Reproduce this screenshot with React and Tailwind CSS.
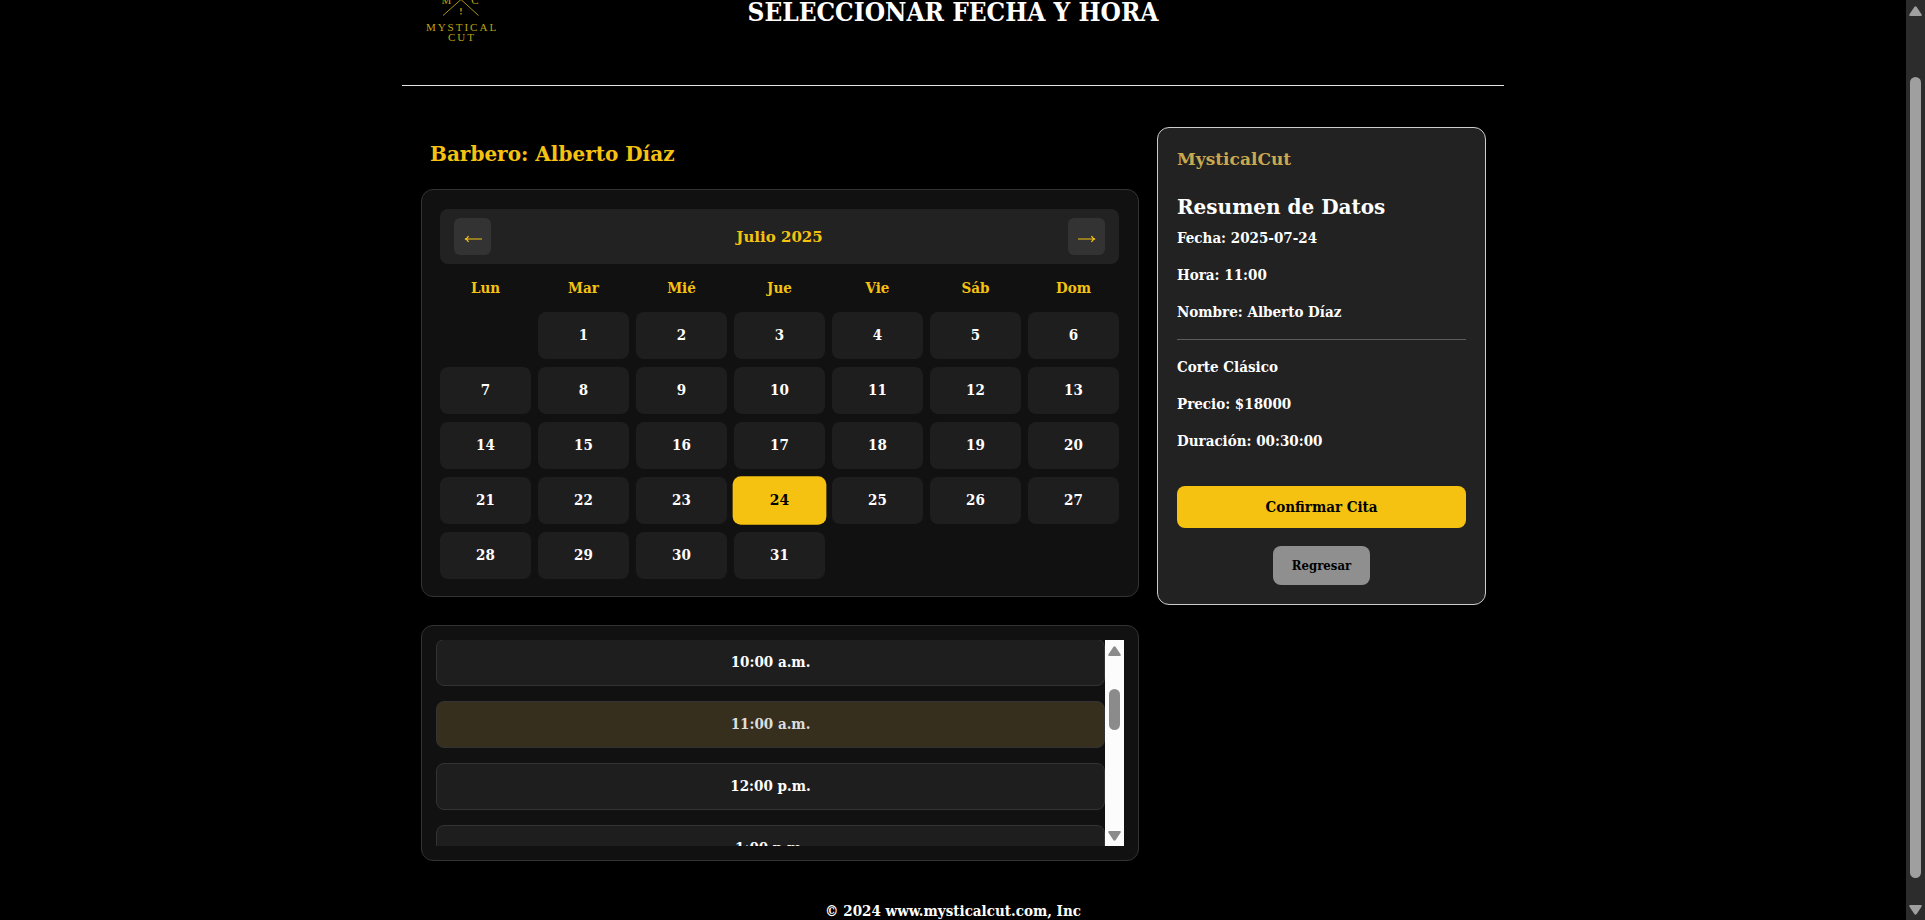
import React, { useState } from "react";

const WEEKDAYS = ["Lun", "Mar", "Mié", "Jue", "Vie", "Sáb", "Dom"];
const DAYS = Array.from({ length: 31 }, (_, i) => i + 1);
const HOURS = ["10:00 a.m.", "11:00 a.m.", "12:00 p.m.", "1:00 p.m."];

function Logo() {
  return (
    <svg
      viewBox="0 0 88 88"
      className="h-[88px] w-[88px]"
      role="img"
      aria-label="Mystical Cut"
      fill="#bda512"
      stroke="none"
    >
      <g fill="none" stroke="#a8920f" strokeWidth="1">
        <path d="M26 47.500 L44 31.500 L61.500 47.500" />
        <path d="M62 15 L44 31 L27 15" />
        <path d="M44 40v3.500M44 45v1.500" strokeWidth="1.500" />
      </g>
      <g fontFamily="'Liberation Serif', serif" fontWeight="400" textAnchor="middle">
        <text x="29.500" y="36" fontSize="11">M</text>
        <text x="58" y="36" fontSize="11">C</text>
        <text x="45" y="63" fontSize="11" letterSpacing="2">MYSTICAL</text>
        <text x="45" y="73" fontSize="11" letterSpacing="2">CUT</text>
      </g>
    </svg>
  );
}

function Arrow({ down = false, className = "" }) {
  return (
    <svg viewBox="0 0 13 10" className={"h-[10px] w-[13px] " + className} aria-hidden="true">
      <path
        d={
          down
            ? "M1.500 0h10q2 0 1 1.700L7.700 9q-1.200 1.500-2.400 0L.5 1.700Q-.5 0 1.500 0z"
            : "M1.500 10h10q2 0 1-1.700L7.700 1Q6.500-.5 5.300 1L.5 8.300Q-.5 10 1.500 10z"
        }
        fill="currentColor"
      />
    </svg>
  );
}

function MonthButton({ label, flip = false }) {
  return (
    <button
      type="button"
      aria-label={label}
      className="flex h-[37px] w-[37px] items-center justify-center rounded-md bg-[#333333] text-[#f5c211]"
    >
      <svg viewBox="0 0 18 8" className={flip ? "mt-1 h-2 w-[18px] rotate-180" : "mt-1 h-2 w-[18px]"}>
        <path d="M1 4h17M4.500 1C4 2.500 3 3.500 1 4c2 .5 3 1.500 3.500 3" fill="none" stroke="currentColor" strokeWidth="1.200" />
      </svg>
    </button>
  );
}

export default function App() {
  const [day, setDay] = useState(24);
  const [hour, setHour] = useState("11:00 a.m.");

  return (
    <div className="flex h-screen overflow-hidden bg-black font-['DejaVu_Serif_Condensed','DejaVu_Serif',serif] text-[15px] font-bold text-white">
      <div className="min-w-0 flex-1 overflow-hidden">
        <div className="mx-auto -mt-14 w-full max-w-[1102px]">
          <header className="grid grid-cols-[1fr_auto_1fr] items-center border-b border-[#e5e5e5] px-[15px] pt-6 pb-[29px]">
            <Logo />
            <h1 className="text-[26px] leading-8">SELECCIONAR FECHA Y HORA</h1>
          </header>

          <main className="flex items-start gap-[18px] pt-[41px] pr-[18px] pl-[19px]">
            <section className="min-w-0 flex-1">
              <h2 className="mt-3 mb-5 ml-[9px] font-['DejaVu_Serif',serif] text-xl leading-[30px] text-[#f5c211]">
                Barbero: Alberto Díaz
              </h2>

              <div className="rounded-xl border border-[#333333] bg-[#111111] pt-[19px] pr-[19px] pb-[17px] pl-[18px]">
                <div className="flex items-center justify-between rounded-lg bg-[#222222] px-[14px] py-[9px]">
                  <MonthButton label="Mes anterior" />
                  <h3 className="font-['DejaVu_Serif',serif] text-[15px] leading-6 text-[#f5c211]">Julio 2025</h3>
                  <MonthButton label="Mes siguiente" flip />
                </div>
                <div className="mt-[14px] grid grid-cols-7 gap-x-[7px] text-center leading-5 text-[#f5c211]">
                  {WEEKDAYS.map((w) => (
                    <span key={w}>{w}</span>
                  ))}
                </div>
                <div className="mt-[14px] grid grid-cols-7 gap-x-[7px] gap-y-2">
                  <span />
                  {DAYS.map((d) => (
                    <button
                      key={d}
                      type="button"
                      aria-pressed={d === day}
                      onClick={() => setDay(d)}
                      className={
                        d === day
                          ? "h-[47px] scale-103 rounded-lg bg-[#f5c211] text-center text-black"
                          : "h-[47px] rounded-lg bg-[#1e1e1e] text-center"
                      }
                    >
                      {d}
                    </button>
                  ))}
                </div>
              </div>

              <div className="mt-7 rounded-xl border border-[#333333] bg-[#111111] p-[14px]">
                <div className="flex h-[206px] overflow-hidden">
                  <div className="-mt-px flex min-w-0 flex-1 flex-col gap-[15px]">
                    {HOURS.map((h) => (
                      <button
                        key={h}
                        type="button"
                        aria-pressed={h === hour}
                        onClick={() => setHour(h)}
                        className={
                          h === hour
                            ? "h-[47px] shrink-0 rounded-lg border border-[#333333] bg-[#372f1e] text-[#dddddd]"
                            : "h-[47px] shrink-0 rounded-lg border border-[#333333] bg-[#1e1e1e]"
                        }
                      >
                        {h}
                      </button>
                    ))}
                  </div>
                  <div className="flex w-[19px] flex-col items-center bg-[#fcfcfc] pt-[6px] pb-[5px] text-[#8b8b8b]">
                    <Arrow />
                    <div className="mt-[33px] h-[41px] w-[11px] rounded-full bg-[#8b8b8b]" />
                    <Arrow down className="mt-auto" />
                  </div>
                </div>
              </div>
            </section>

            <aside className="w-[329px] shrink-0 rounded-xl border border-[#cccccc] bg-[#222222] p-[19px]">
              <h3 className="font-['DejaVu_Serif',serif] text-[17px] leading-6 text-[#c9a94f]">MysticalCut</h3>
              <h2 className="mt-5 font-['DejaVu_Serif',serif] text-xl leading-8">Resumen de Datos</h2>
              <div className="mt-1 flex flex-col gap-[15px] leading-[22px]">
                <p>Fecha: 2025-07-24</p>
                <p>Hora: 11:00</p>
                <p>Nombre: Alberto Díaz</p>
              </div>
              <hr className="my-4 border-[#5c5c5c]" />
              <div className="flex flex-col gap-[15px] leading-[22px]">
                <p>Corte Clásico</p>
                <p>Precio: $18000</p>
                <p>Duración: 00:30:00</p>
              </div>
              <button type="button" className="mt-[34px] block h-[42px] w-full rounded-lg bg-[#f5c211] text-black">
                Confirmar Cita
              </button>
              <button type="button" className="mx-auto mt-[18px] block h-[39px] rounded-lg bg-[#8f8f8f] px-[19px] text-[13px] text-black">
                Regresar
              </button>
            </aside>
          </main>

          <footer className="mt-10 text-center leading-5">© 2024 www.mysticalcut.com, Inc</footer>
        </div>
      </div>
      <div className="flex w-[19px] shrink-0 flex-col items-center bg-[#2c2c2c] pt-[6px] pb-[5px] text-[#9f9f9f]">
        <Arrow />
        <div className="mt-[61px] mb-[27px] w-[11px] flex-1 rounded-full bg-[#9f9f9f]" />
        <Arrow down />
      </div>
    </div>
  );
}
